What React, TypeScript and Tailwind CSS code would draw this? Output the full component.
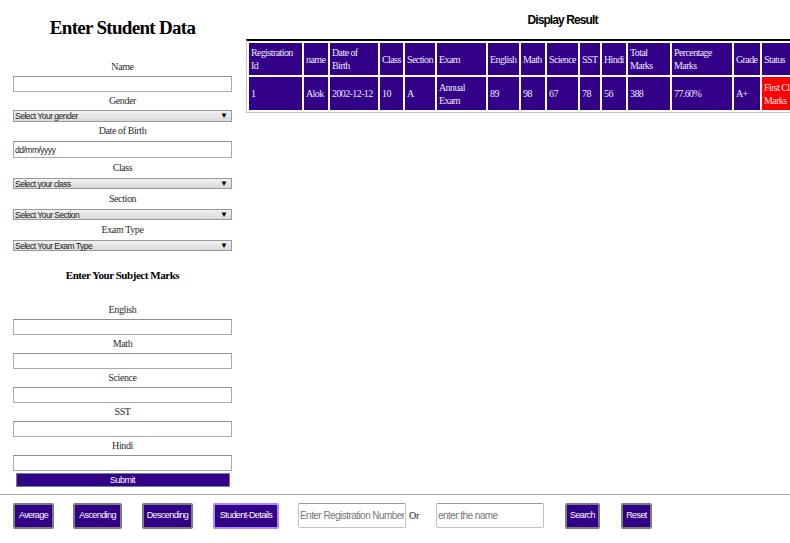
const headers = [
  'Registration Id',
  'name',
  'Date of Birth',
  'Class',
  'Section',
  'Exam',
  'English',
  'Math',
  'Science',
  'SST',
  'Hindi',
  'Total Marks',
  'Percentage Marks',
  'Grade',
  'Status',
]

const widths = [53, 24, 48, 23, 30, 49, 31, 24, 31, 20, 24, 42, 60, 26, 60]

const row = ['1', 'Alok', '2002-12-12', '10', 'A', 'Annual Exam', '89', '98', '67', '78', '56', '388', '77.60%', 'A+', 'First Class Marks']

const Label = ({ text, className = '' }: { text: string; className?: string }) => (
  <div className={`h-[13px] text-[10px] leading-[13px] tracking-[-0.4px] text-[#2b2b2b] ${className}`}>{text}</div>
)

const TextBox = ({ className = '', placeholder }: { className?: string; placeholder?: string }) => (
  <input
    type="text"
    placeholder={placeholder}
    className={`w-[219px] border border-[#a9a9a9] border-t-[#8f8f8f] bg-white px-[1px] font-['Liberation_Sans',sans-serif] text-[8.5px] tracking-[-0.5px] placeholder:text-[#222] outline-none ${className}`}
  />
)

const SelectBox = ({ text, className = '' }: { text: string; className?: string }) => (
  <div
    className={`flex w-[219px] items-center justify-between border border-[#9a9a9a] bg-gradient-to-b from-[#f2f2f2] to-[#d9d9d9] pl-[1px] pr-[3px] font-['Liberation_Sans',sans-serif] text-[8.5px] leading-[10px] tracking-[-0.5px] text-[#1a1a1a] ${className}`}
  >
    <span>{text}</span>
    <span className="text-[8px] tracking-normal text-black">▼</span>
  </div>
)

const Btn = ({ text, className = '' }: { text: string; className?: string }) => (
  <button
    className={`h-[26px] shrink-0 rounded-[2px] border-2 bg-[#330088] px-0 font-['Liberation_Sans',sans-serif] text-[9px] tracking-[-0.6px] text-white ${className}`}
  >
    {text}
  </button>
)

export default function App() {
  return (
    <div className="h-[543px] w-[790px] overflow-hidden bg-white font-['Liberation_Serif',serif]">
      <div className="flex h-[494px]">
        <div className="flex w-[245px] shrink-0 flex-col items-center">
          <h1 className="mt-[17px] h-[22px] text-[19px] font-bold leading-[22px] tracking-[-0.7px] text-black">
            Enter Student Data
          </h1>
          <Label text="Name" className="mt-[21px]" />
          <TextBox className="mt-[3px] h-[16px]" />
          <Label text="Gender" className="mt-[2px]" />
          <SelectBox text="Select Your gender" className="mt-[3px] h-[12px]" />
          <Label text="Date of Birth" className="mt-[2px]" />
          <TextBox className="mt-[4px] h-[17px]" placeholder="dd/mm/yyyy" />
          <Label text="Class" className="mt-[3px]" />
          <SelectBox text="Select your class" className="mt-[4px] h-[11px]" />
          <Label text="Section" className="mt-[3px]" />
          <SelectBox text="Select Your Section" className="mt-[4px] h-[11px]" />
          <Label text="Exam Type" className="mt-[3px]" />
          <SelectBox text="Select Your Exam Type" className="mt-[4px] h-[11px]" />
          <h3 className="mt-[17px] h-[14px] text-[11px] font-bold leading-[14px] tracking-[-0.45px] text-black">
            Enter Your Subject Marks
          </h3>
          <Label text="English" className="mt-[21px]" />
          <TextBox className="mt-[3px] h-[16px]" />
          <Label text="Math" className="mt-[2px]" />
          <TextBox className="mt-[3px] h-[16px]" />
          <Label text="Science" className="mt-[2px]" />
          <TextBox className="mt-[3px] h-[16px]" />
          <Label text="SST" className="mt-[2px]" />
          <TextBox className="mt-[3px] h-[16px]" />
          <Label text="Hindi" className="mt-[2px]" />
          <TextBox className="mt-[3px] h-[16px]" />
          <button className="mt-[2px] h-[14px] w-[214px] border border-[#7d7d7d] bg-[#330088] font-['Liberation_Sans',sans-serif] text-[9px] leading-[12px] tracking-[-0.5px] text-white">
            Submit
          </button>
        </div>

        <div className="w-[635px] shrink-0 pt-[12px]">
          <h2 className="h-[16px] text-center font-['Liberation_Sans',sans-serif] text-[12px] font-bold leading-[16px] tracking-[-0.9px] text-black">
            Display Result
          </h2>
          <table className="ml-[1px] mt-[11px] w-[579px] table-fixed border-separate border-spacing-[2px] border border-[#c4c4c4] border-t-2 border-t-black text-[10px] leading-[13px] tracking-[-0.6px] text-[#ebe8ff]">
            <thead>
              <tr>
                {headers.map((h, i) => (
                  <th
                    key={h}
                    style={{ width: widths[i] }}
                    className="h-[32px] bg-[#330088] px-[2px] text-left align-middle font-normal"
                  >
                    {h}
                  </th>
                ))}
              </tr>
            </thead>
            <tbody>
              <tr>
                {row.map((c, i) => (
                  <td
                    key={i}
                    className={`h-[33px] px-[2px] align-middle ${i === 14 ? 'bg-[#ff0000] text-[#ffe6e6]' : 'bg-[#330088]'}`}
                  >
                    {c}
                  </td>
                ))}
              </tr>
            </tbody>
          </table>
        </div>
      </div>

      <div className="flex items-start gap-[19px] border-t border-[#ababab] pl-[13px] pt-[8px]">
        <Btn text="Average" className="w-[41px] border-[#7d7d7d]" />
        <Btn text="Ascending" className="w-[49px] border-[#7d7d7d]" />
        <Btn text="Descending" className="ml-[1px] w-[51px] border-[#7d7d7d]" />
        <Btn text="Student-Details" className="ml-[1px] w-[66px] border-[#a88cff]" />
        <div className="flex items-center gap-[3px]">
          <input
            type="text"
            placeholder="Enter Registration Number"
            className="h-[25px] w-[108px] rounded-[2px] border border-[#c2c2c2] border-t-[#9a9a9a] px-[1px] font-['Liberation_Sans',sans-serif] text-[10px] tracking-[-0.55px] placeholder:text-[#777] outline-none"
          />
          <span className="mr-[-2px] text-[10px] tracking-[-0.3px] text-[#222]">Or</span>
        </div>
        <input
          type="text"
          placeholder="enter the name"
          className="h-[25px] w-[108px] rounded-[2px] border border-[#c2c2c2] border-t-[#9a9a9a] px-[1px] font-['Liberation_Sans',sans-serif] text-[10px] tracking-[-0.55px] placeholder:text-[#777] outline-none"
        />
        <Btn text="Search" className="ml-[2px] w-[35px] border-[#7d7d7d]" />
        <Btn text="Reset" className="ml-[2px] w-[31px] border-[#7d7d7d]" />
      </div>
    </div>
  )
}
